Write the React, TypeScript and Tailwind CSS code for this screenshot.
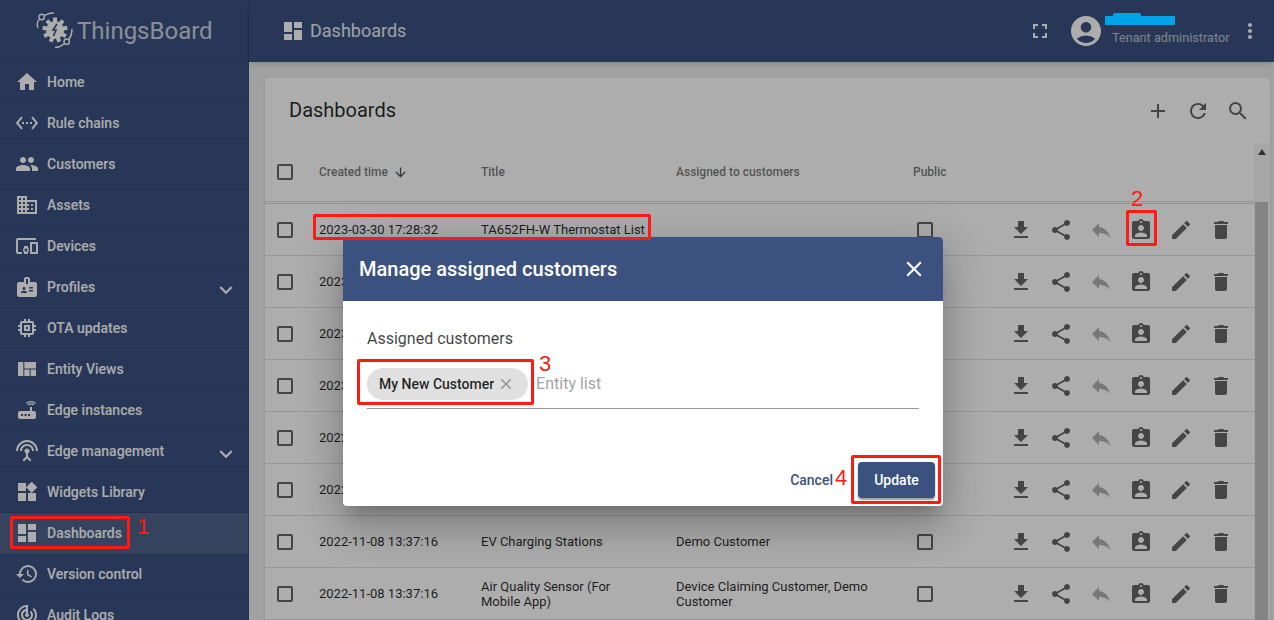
import React from "react";
import {
  MdHome, MdSettingsEthernet, MdPeople, MdDomain, MdDevicesOther, MdBadge, MdMemory, MdViewQuilt, MdRouter,
  MdSettingsInputAntenna, MdWidgets, MdDashboard, MdHistory, MdTrackChanges, MdExpandMore, MdFullscreen,
  MdAccountCircle, MdMoreVert, MdAdd, MdRefresh, MdSearch, MdArrowDownward, MdFileDownload, MdShare, MdReply,
  MdAssignmentInd, MdEdit, MdDelete, MdClose,
} from "react-icons/md";

const nav: [string, React.ComponentType<{ size?: number; className?: string }>, boolean?, boolean?][] = [
  ["Home", MdHome],
  ["Rule chains", MdSettingsEthernet],
  ["Customers", MdPeople],
  ["Assets", MdDomain],
  ["Devices", MdDevicesOther],
  ["Profiles", MdBadge, true],
  ["OTA updates", MdMemory],
  ["Entity Views", MdViewQuilt],
  ["Edge instances", MdRouter],
  ["Edge management", MdSettingsInputAntenna, true],
  ["Widgets Library", MdWidgets],
  ["Dashboards", MdDashboard, false, true],
  ["Version control", MdHistory],
  ["Audit Logs", MdTrackChanges],
];

const rows: [string, string, string][] = [
  ["2023-03-30 17:28:32", "TA652FH-W Thermostat List", ""],
  ["2023-03-30 17:20:11", "", ""],
  ["2023-03-29 10:14:05", "", ""],
  ["2023-01-12 09:41:26", "", ""],
  ["2022-12-05 15:02:48", "", ""],
  ["2022-11-08 13:37:16", "", ""],
  ["2022-11-08 13:37:16", "EV Charging Stations", "Demo Customer"],
  ["2022-11-08 13:37:16", "Air Quality Sensor (For Mobile App)", "Device Claiming Customer, Demo Customer"],
];

function Logo() {
  return (
    <svg width="38" height="38" viewBox="0 0 38 38" className="text-white shrink-0" fill="none" stroke="currentColor">
      <g transform="translate(19 18)">
        <circle r="9" fill="currentColor" stroke="none" />
        {[0, 40, 80, 120, 160, 200, 240, 280, 320].map((a) => (
          <rect key={a} x="-2" y="-12.5" width="4" height="5" fill="currentColor" stroke="none" transform={`rotate(${a})`} />
        ))}
        <path d="M2 -6 L-2 0 L1 0 L-1.5 6" stroke="#3b5280" strokeWidth="1.6" />
      </g>
      <path d="M2 16 C0.5 12 1.5 9 3.5 7" strokeWidth="1.4" />
      <path d="M8.5 3.5 C11 2 14 1 18 0.8" strokeWidth="1.4" />
      <circle cx="5.7" cy="5" r="2.7" strokeWidth="1.4" />
      <path d="M19 35.5 C22 35.5 25 34.5 28 32" strokeWidth="1.4" />
      <path d="M33 27.5 C35 24.5 36 21 36 17" strokeWidth="1.4" />
      <circle cx="30.7" cy="29.7" r="2.7" strokeWidth="1.4" />
    </svg>
  );
}

function Check() {
  return <span className="block w-4 h-4 border-2 border-black/60 rounded-[2px]" />;
}

function Row({ r }: { r: (typeof rows)[number] }) {
  return (
    <div className="h-[52px] flex items-center border-b border-black/[.12] text-[13px] text-black/85 shrink-0">
      <div className="w-[54px] pl-3 shrink-0"><Check /></div>
      <div className="w-[162px] shrink-0">{r[0]}</div>
      <div className="w-[195px] shrink-0 pr-[24px] leading-[15px]">{r[1]}</div>
      <div className="w-[237px] shrink-0 pr-8 leading-[15px]">{r[2]}</div>
      <div className="w-[89px] shrink-0 pl-[4px]"><Check /></div>
      <div className="flex text-black/60 gap-[16px] pl-[7px]">
        <MdFileDownload size={24} />
        <MdShare size={24} />
        <MdReply size={24} className="text-black/30" />
        <MdAssignmentInd size={24} />
        <MdEdit size={24} />
        <MdDelete size={24} />
      </div>
    </div>
  );
}

function Mark({ className }: { className: string }) {
  return <div className={`absolute border-[3px] border-[#ff1a12] rounded-[2px] ${className}`} />;
}

function Num({ className, children }: { className: string; children: React.ReactNode }) {
  return <div className={`absolute text-[#ff1a12] text-[22px] leading-none font-['Liberation_Sans',sans-serif] ${className}`}>{children}</div>;
}

export default function App() {
  return (
    <div className="relative w-[1274px] h-[620px] overflow-hidden bg-[#eeeeee] flex font-['Roboto',sans-serif]">
      <aside className="w-[249px] shrink-0 bg-[#3b5280] text-white h-full overflow-hidden border-r border-black/10">
        <div className="h-[62px] flex items-center pl-[36px] gap-[3px] border-b border-black/10">
          <Logo />
          <span className="text-[24px] font-normal text-white/75">ThingsBoard</span>
        </div>
        {nav.map(([label, Icon, more, active]) => (
          <div key={label} className={`h-[41px] flex items-center pl-[15px] pr-[9px] border-b border-black/10 text-[14px] font-medium ${active ? "bg-white/10" : ""}`}>
            <Icon size={24} className="shrink-0" />
            <span className="ml-[8px] flex-1">{label}</span>
            {more && <MdExpandMore size={26} className="mt-[5px]" />}
          </div>
        ))}
      </aside>
      <div className="flex-1 min-w-0 flex flex-col">
        <header className="h-[62px] shrink-0 bg-[#3b5280] text-white flex items-center pl-[32px] pr-[12px] shadow-md">
          <MdDashboard size={24} />
          <span className="ml-[5px] text-[18px] text-white/90 -mt-[1px]">Dashboards</span>
          <div className="flex-1" />
          <MdFullscreen size={24} />
          <MdAccountCircle size={36} className="ml-[16px]" />
          <div className="ml-[8px] w-[126px] flex flex-col justify-center whitespace-nowrap">
            <span className="text-[13px] leading-[16px] h-[16px] -mt-[4px]">t</span>
            <span className="text-[12.7px] leading-[16px] text-white/65 mt-[2px]">Tenant administrator</span>
          </div>
          <MdMoreVert size={24} />
        </header>
        <main className="flex-1 min-h-0 pl-[16px] pt-[16px] overflow-hidden">
          <section className="w-[1005px] bg-white rounded-[4px] shadow flex flex-col h-[600px]">
            <div className="h-[65px] shrink-0 flex items-center pl-[24px] pr-[20px] text-black/60">
              <h1 className="text-[20px] font-normal text-black/85 flex-1 -mt-[1px]">Dashboards</h1>
              <MdAdd size={24} />
              <MdRefresh size={24} className="ml-[16px]" />
              <MdSearch size={24} className="ml-[16px]" />
            </div>
            <div className="flex flex-1 min-h-0">
              <div className="w-[989px] shrink-0 flex flex-col">
                <div className="h-[61px] shrink-0 flex items-center text-[12px] font-medium text-black/55 border-b-[3px] border-double border-black/[.15]">
                  <div className="w-[54px] pl-3 shrink-0"><Check /></div>
                  <div className="w-[162px] shrink-0 flex items-center gap-[5px]">Created time <MdArrowDownward size={15} className="text-black/70" /></div>
                  <div className="w-[195px] shrink-0">Title</div>
                  <div className="w-[237px] shrink-0">Assigned to customers</div>
                  <div>Public</div>
                </div>
                {rows.map((r, i) => <Row key={i} r={r} />)}
              </div>
              <div className="w-[16px] shrink-0 bg-[#f6f6f6] flex flex-col items-start">
                <svg width="16" height="59" viewBox="0 0 16 59" className="shrink-0 text-black/70">
                  <path d="M4 12 L8 6 L12 12 Z" fill="currentColor" />
                </svg>
                <div className="ml-[1px] w-[13px] flex-1 bg-[#c1c1c1]" />
              </div>
            </div>
          </section>
        </main>
      </div>

      <div className="absolute inset-0 bg-black/[.32]" />

      {/* dialog */}
      <div className="absolute left-[343px] top-[237px] w-[600px] h-[269px] bg-white rounded-[4px] overflow-hidden shadow-[0_11px_15px_-7px_rgba(0,0,0,0.2),0_24px_38px_3px_rgba(0,0,0,0.14),0_9px_46px_8px_rgba(0,0,0,0.12)] flex flex-col">
        <div className="h-[64px] shrink-0 bg-[#3b5280] text-white flex items-center pl-[16px] pr-[16px]">
          <h2 className="flex-1 text-[20px] font-medium">Manage assigned customers</h2>
          <MdClose size={26} />
        </div>
        <div className="px-[24px] pt-[28px] flex-1">
          <div className="text-[16px] text-black/75 leading-[19px]">Assigned customers</div>
          <div className="mt-[11px] h-[50px] w-[552px] border-b border-black/40 flex items-start pt-[9px]">
            <div className="h-[32px] bg-[#e0e0e0] rounded-full pl-[12px] pr-[13px] flex items-center text-[14px] font-medium text-black/85">
              My New Customer
              <MdClose size={18} className="ml-[3px] text-black/35" />
            </div>
            <span className="ml-[8px] mt-[6px] text-[16px] text-black/40 leading-[20px]">Entity list</span>
          </div>
        </div>
        <div className="h-[52px] shrink-0 flex items-center justify-end pr-[8px]">
          <span className="text-[14px] font-medium text-[#3b5280] mr-[25px]">Cancel</span>
          <button className="w-[77px] h-[36px] rounded-[4px] bg-[#3b5280] text-white text-[14px] font-medium shadow-[0_2px_2px_rgba(0,0,0,0.4)]">Update</button>
        </div>
      </div>

      {/* annotations */}
      <div className="absolute left-[1105px] top-[16px] w-[70px] h-[9px] bg-[#00a2e8]" />
      <div className="absolute left-[1113px] top-[13px] w-[28px] h-[4px] bg-[#00a2e8] rounded-t-[2px]" />
      <Mark className="left-[10px] top-[516px] w-[120px] h-[33px]" />
      <Mark className="left-[313px] top-[214px] w-[338px] h-[26px]" />
      <Mark className="left-[1126px] top-[210px] w-[31px] h-[36px]" />
      <Mark className="left-[357px] top-[359px] w-[177px] h-[46px]" />
      <Mark className="left-[851px] top-[455px] w-[90px] h-[49px]" />
      <Num className="left-[137px] top-[516px]">1</Num>
      <Num className="left-[1131px] top-[188px]">2</Num>
      <Num className="left-[539px] top-[353px]">3</Num>
      <Num className="left-[835px] top-[467px]">4</Num>
    </div>
  );
}
